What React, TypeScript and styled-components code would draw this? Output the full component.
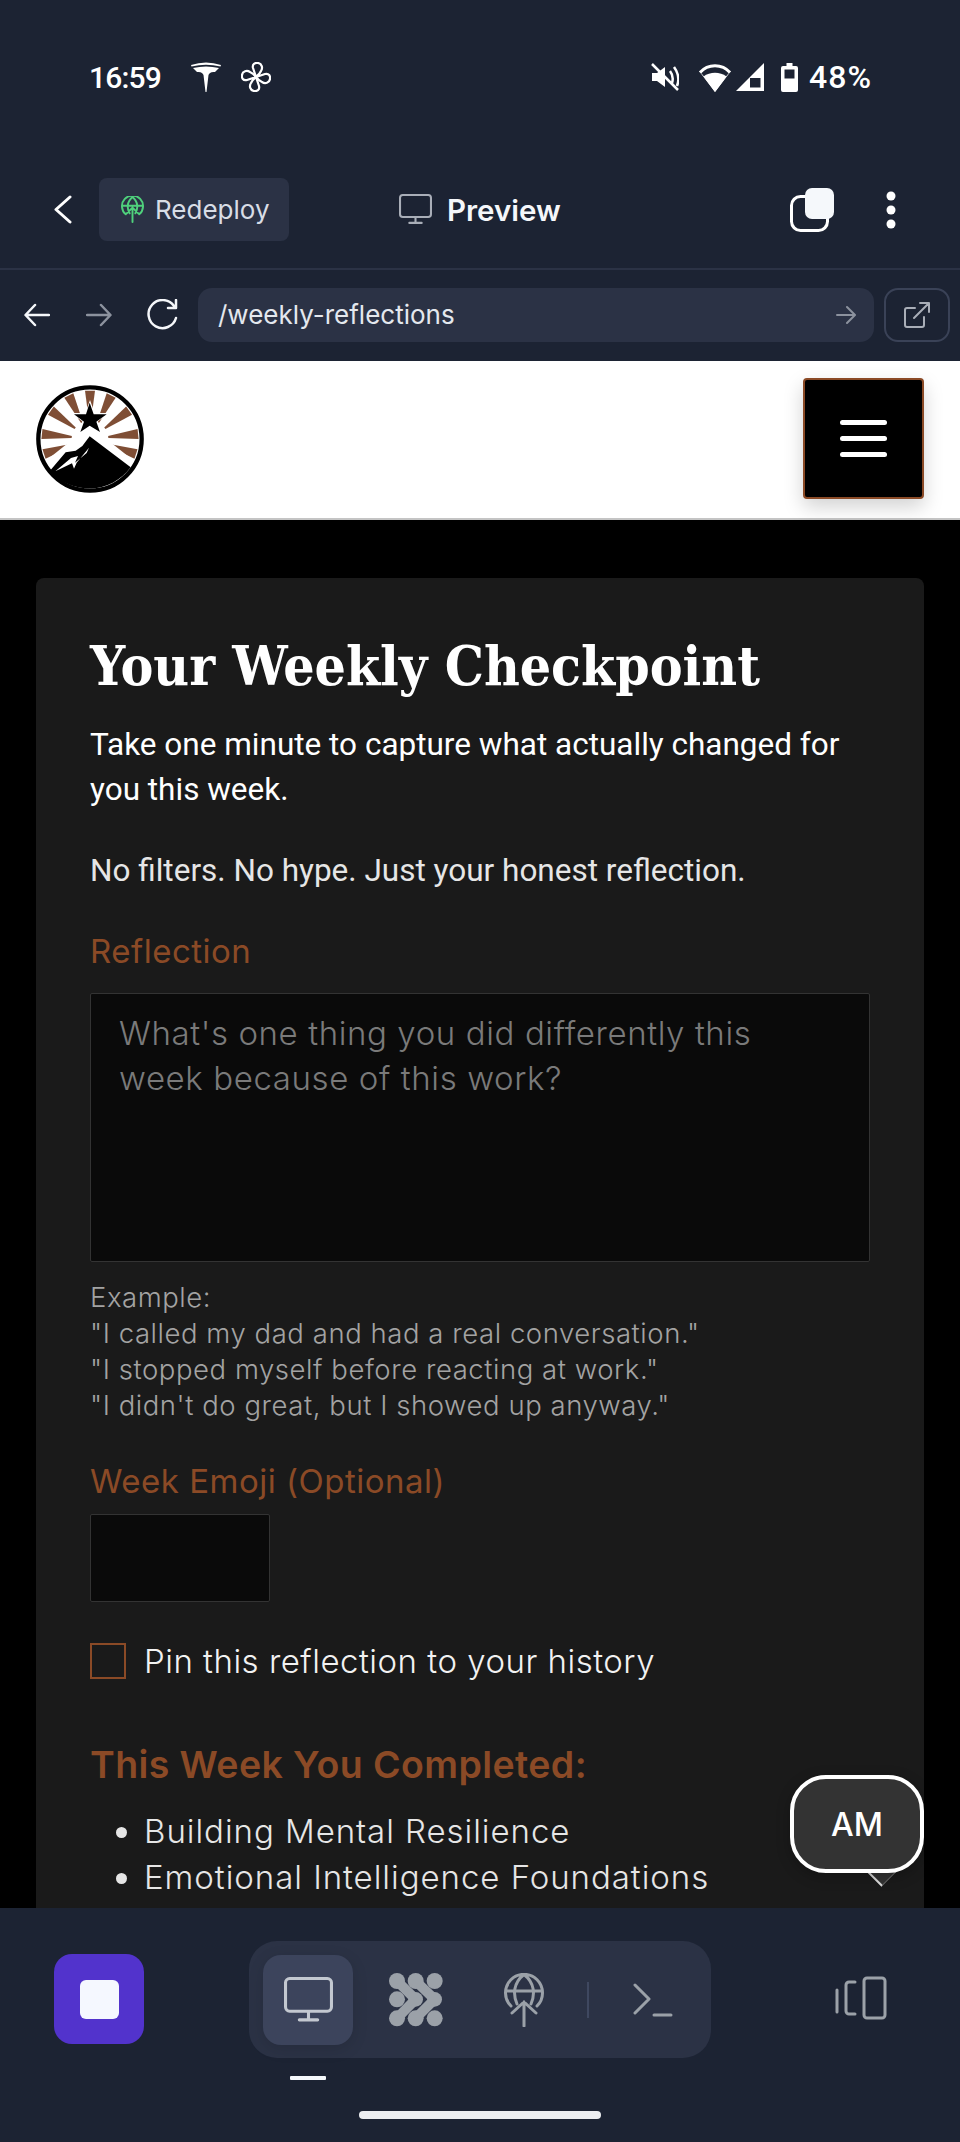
import React from 'react';
import styled, { createGlobalStyle } from 'styled-components';

const GlobalStyle = createGlobalStyle`
  html, body {
    margin: 0;
    padding: 0;
    background: #1c2333;
  }
  * {
    box-sizing: border-box;
  }
`;

const Phone = styled.div`
  width: 960px;
  height: 2142px;
  display: flex;
  flex-direction: column;
  overflow: hidden;
  background: #1c2333;
  font-family: 'Inter', sans-serif;
  color: #f5f7fa;
`;

const StatusBar = styled.div`
  height: 170px;
  flex: none;
  padding: 58px 88px 0 89px;
  display: flex;
  align-items: flex-start;
  justify-content: space-between;
`;

const StatusGroup = styled.div`
  display: flex;
  align-items: center;
  height: 38px;
`;

const Clock = styled.span`
  font-family: 'Roboto', sans-serif;
  font-size: 30px;
  font-weight: 500;
  letter-spacing: -0.8px;
  color: #fff;
`;

const BatteryText = styled.span`
  margin-left: 11px;
  font-family: 'Roboto', sans-serif;
  font-size: 32px;
  font-weight: 500;
  letter-spacing: 1px;
  color: #fff;
`;

const ToolBar = styled.div`
  height: 100px;
  flex: none;
  display: flex;
  align-items: center;
  padding: 0 0 19px 54px;
  border-bottom: 2px solid #2b3245;
`;

const RedeployButton = styled.div`
  width: 190px;
  height: 63px;
  margin-left: 27px;
  border-radius: 8px;
  background: #2b3245;
  display: flex;
  align-items: center;
  padding-left: 22px;
  gap: 11px;
  font-size: 26px;
  color: #d8dde6;
`;

const PreviewTitle = styled.div`
  display: flex;
  align-items: center;
  gap: 15px;
  margin-left: 110px;
  font-size: 29.5px;
  font-weight: 600;
  color: #f5f7fa;
`;

const ToolActions = styled.div`
  margin-left: auto;
  display: flex;
  align-items: center;
  gap: 52px;
  padding-right: 64px;
`;

const BrowserBar = styled.div`
  height: 91px;
  flex: none;
  display: flex;
  align-items: center;
  padding: 0 0 2px 24px;
`;

const UrlField = styled.div`
  width: 676px;
  height: 54px;
  margin-left: 19px;
  border-radius: 14px;
  background: #2b3245;
  display: flex;
  align-items: center;
  justify-content: space-between;
  padding: 0 18px 0 20px;
  font-size: 26px;
  color: #e4e8ee;
`;

const OpenButton = styled.div`
  width: 66px;
  height: 54px;
  margin-left: 10px;
  border: 2px solid #3a4257;
  border-radius: 14px;
  display: flex;
  align-items: center;
  justify-content: center;
`;

const WebView = styled.div`
  position: relative;
  flex: 1;
  min-height: 0;
  overflow: hidden;
  background: #000;
`;

const SiteHeader = styled.div`
  height: 159px;
  background: #fff;
  border-bottom: 2px solid #c4c4c4;
  display: flex;
  align-items: center;
  justify-content: space-between;
  padding: 0 36px 2px 36px;
`;

const MenuButton = styled.div`
  width: 121px;
  height: 121px;
  background: #000;
  border: 2px solid #8b4a26;
  border-radius: 4px;
  box-shadow: 0 8px 20px rgba(0, 0, 0, 0.18);
  display: flex;
  flex-direction: column;
  align-items: center;
  justify-content: center;
  gap: 11px;
`;

const MenuLine = styled.span`
  width: 47px;
  height: 5px;
  border-radius: 3px;
  background: #fff;
`;

const Card = styled.div`
  margin: 58px 36px 0 36px;
  padding: 57px 54px 120px;
  background: #1a1a1a;
  border-radius: 8px;
`;

const Heading = styled.h1`
  margin: 0;
  font-family: 'DejaVu Serif Condensed', 'DejaVu Serif', serif;
  font-size: 54.8px;
  line-height: 62px;
  font-weight: 700;
  white-space: nowrap;
  color: #fff;
`;

const Lead = styled.p`
  margin: 25px 0 0;
  font-family: 'Roboto', sans-serif;
  font-size: 31.5px;
  line-height: 45px;
  color: #fff;
`;

const Tagline = styled(Lead)`
  margin-top: 36px;
  color: #e6e6e6;
`;

const FieldLabel = styled.div`
  margin-top: 38px;
  font-size: 33px;
  font-weight: 400;
  letter-spacing: 0.5px;
  line-height: 40px;
  color: #8b4a26;
`;

const TextArea = styled.div`
  height: 269px;
  margin-top: 22px;
  padding: 17px 40px 22px 28px;
  background: #0a0a0a;
  border: 1px solid #333;
  border-radius: 2px;
  font-size: 33px;
  font-weight: 300;
  letter-spacing: 0.6px;
  line-height: 45px;
  color: #7a7a7a;
`;

const Hint = styled.div`
  margin-top: 17px;
  font-size: 27.5px;
  font-weight: 300;
  letter-spacing: 0.55px;
  line-height: 36px;
  color: #a3a3a3;
`;

const EmojiBox = styled.div`
  width: 180px;
  height: 88px;
  margin-top: 13px;
  background: #0a0a0a;
  border: 1px solid #333;
  border-radius: 2px;
`;

const PinRow = styled.div`
  display: flex;
  align-items: center;
  gap: 18px;
  margin-top: 39px;
  font-size: 33px;
  font-weight: 300;
  letter-spacing: 0.5px;
  color: #f2f2f2;
`;

const CheckBox = styled.span`
  width: 36px;
  height: 36px;
  border: 2px solid #8b4a26;
`;

const SubHeading = styled.h2`
  margin: 61px 0 0;
  font-size: 37.5px;
  line-height: 46px;
  font-weight: 600;
  letter-spacing: 0.4px;
  color: #8b4a26;
`;

const Modules = styled.ul`
  margin: 20px 0 0;
  padding-left: 54px;
  font-size: 33px;
  font-weight: 300;
  letter-spacing: 0.95px;
  line-height: 46px;
  color: #e6e6e6;
`;

const Bubble = styled.div`
  position: absolute;
  top: 1414px;
  right: 36px;
  width: 134px;
  height: 98px;
  border: 4px solid #fff;
  border-radius: 36px;
  background: #333;
  box-shadow: 0 4px 14px rgba(0, 0, 0, 0.25);
  display: flex;
  align-items: center;
  justify-content: center;
  font-size: 32px;
  font-weight: 500;
  color: #fff;
`;

const BubbleTail = styled.span`
  position: absolute;
  top: 1498px;
  left: 870px;
  width: 23px;
  height: 23px;
  background: #333;
  border-right: 1px solid #666;
  border-bottom: 2px solid #ddd;
  transform: rotate(45deg);
`;

const BottomNav = styled.div`
  position: relative;
  height: 234px;
  flex: none;
  background: #1c2333;
  display: flex;
  align-items: flex-start;
  padding: 33px 0 0 54px;
`;

const StopButton = styled.div`
  width: 90px;
  height: 90px;
  margin-top: 13px;
  border-radius: 18px;
  background: #5233cc;
  display: flex;
  align-items: center;
  justify-content: center;
`;

const StopSquare = styled.span`
  width: 39px;
  height: 39px;
  border-radius: 6px;
  background: #f5f8ff;
`;

const TabPill = styled.div`
  width: 462px;
  height: 117px;
  margin-left: 105px;
  border-radius: 28px;
  background: #2b3245;
  display: flex;
  align-items: center;
  padding-left: 14px;
`;

const Tab = styled.div<{ $active?: boolean }>`
  width: 90px;
  height: 90px;
  border-radius: 18px;
  margin-right: 18px;
  display: flex;
  align-items: center;
  justify-content: center;
  background: ${(p) => (p.$active ? '#3c445c' : 'transparent')};
  box-shadow: ${(p) => (p.$active ? '0 4px 16px rgba(0, 0, 0, 0.12)' : 'none')};
`;

const TabDivider = styled.span`
  width: 2px;
  height: 36px;
  background: #3f4860;
`;

const TerminalIcon = styled.svg`
  margin-left: 44px;
`;

const TabIndicator = styled.span`
  position: absolute;
  left: 290px;
  top: 168px;
  width: 36px;
  height: 4px;
  background: #f5f9fc;
  border-radius: 1px;
`;

const HomeBar = styled.span`
  position: absolute;
  left: 359px;
  top: 203px;
  width: 242px;
  height: 8px;
  border-radius: 4px;
  background: #eceef1;
`;

const PanesIcon = styled.div`
  margin: 35px 0 0 124px;
`;

const IconGap = styled.span<{ $w: number }>`
  display: inline-block;
  flex: none;
  width: ${(p) => p.$w}px;
`;

const Monitor = ({ width, color }: { width: number; color: string }) => (
  <svg width={width} height={(width * 44) / 48} viewBox="0 0 48 44" fill="none" stroke={color} strokeWidth="3" strokeLinecap="round" strokeLinejoin="round">
    <rect x="1.5" y="1.5" width="45" height="32" rx="4" />
    <path d="M24 34v8M15 42h18" />
  </svg>
);

const RAYS = [-108, -84, -54, -26, 0, 26, 54, 84, 108];

// drawn in the coordinates of a 3x crop of the logo
const Logo = () => (
  <svg width="108" height="108" viewBox="46 43 324 324">
    <circle cx="208" cy="205" r="155" fill="#fff" />
    {RAYS.map((a) => (
      <path key={a} d="M193 60H223L211 150H205Z" fill="#7f4e35" transform={`rotate(${a} 208 205)`} />
    ))}
    <path d="M207 165 345 275 208 350 70 275Z" fill="#fff" />
    <path d="M208 88 222 127 266 127 232 152 246 194 208 170 172 194 185 152 150 127 194 127Z" fill="#fff" />
    <path d="M207 96 219 131 258 131 227 153 238 184 207 165 179 184 190 153 160 131 196 131Z" fill="#000" />
    <path d="M207 197 330 290A155 155 0 0 1 88 300L135 245 165 240 185 226Z" fill="#000" />
    <path d="M104 302 151 262 172 256 163 276 198 247 205 231 168 276 160 294 154 278Z" fill="#fff" />
    <circle cx="208" cy="205" r="155" fill="none" stroke="#000" strokeWidth="13" />
  </svg>
);

export default function App() {
  return (
    <Phone>
      <GlobalStyle />
      <StatusBar>
        <StatusGroup>
          <Clock>16:59</Clock>
          <IconGap $w={30} />
          <svg width="30" height="30" viewBox="0 0 30 30" fill="#fff">
            <path d="M0 3Q15-2 30 3L29.500 4.500Q15 1 .5 4.500Z" />
            <path d="M2 6Q15 3 28 6L24 10C20 9.500 18 11 17.500 13L15.500 30H14.500L12.500 13C12 11 10 9.500 6 10Z" />
          </svg>
          <IconGap $w={20} />
          <svg width="30" height="30" viewBox="0 0 30 30" fill="none" stroke="#fff" strokeWidth="2.200" strokeLinejoin="round">
            {[0, 90, 180, 270].map((a) => (
              <path key={a} d="M15 15 12 6C11 2 14 .5 17 1 21 1.500 22 6 20 9 19 11.500 17 13.500 15 15Z" transform={`rotate(${a} 15 15)`} />
            ))}
          </svg>
        </StatusGroup>
        <StatusGroup>
          <svg width="28" height="28" viewBox="0 0 28 28" fill="none" stroke="#fff" strokeWidth="2.500">
            <path d="M1 1 27 27" />
            <path d="M1 10h5l8-6v20l-8-6H1Z" fill="#fff" stroke="none" />
            <path d="M19 8c3 4 3 9 2 12M23 4c5 7 5 14 3 19" />
          </svg>
          <IconGap $w={19} />
          <svg width="34" height="29" viewBox="0 0 34 29" fill="none">
            <path d="M17 29 5.500 13.500C12 8.500 22 8.500 28.500 13.500Z" fill="#fff" />
            <path d="M2 9.500C10 .5 24 .5 32 9.500" stroke="#fff" strokeWidth="3" />
            <path d="M17 29 1 8 4 11 17 27 30 11 33 8Z" fill="#fff" />
          </svg>
          <IconGap $w={4} />
          <svg width="28" height="28" viewBox="0 0 28 28" fill="#fff" fillRule="evenodd">
            <path d="M28 0V28H0ZM24.500 15H14V24.500H24.500Z" />
          </svg>
          <IconGap $w={17} />
          <svg width="17" height="29" viewBox="0 0 17 29" fill="#fff" fillRule="evenodd">
            <path d="M5.500 0h6v3H15a2 2 0 0 1 2 2v22a2 2 0 0 1-2 2H2a2 2 0 0 1-2-2V5a2 2 0 0 1 2-2h3.500ZM3.500 6.500v9h10v-9Z" />
          </svg>
          <BatteryText>48%</BatteryText>
        </StatusGroup>
      </StatusBar>

      <ToolBar>
        <svg width="18" height="29" viewBox="0 0 18 29" fill="none" stroke="#fff" strokeWidth="3" strokeLinecap="round" strokeLinejoin="round">
          <path d="M16 2 2 14.500 16 27" />
        </svg>
        <RedeployButton>
          <svg width="23" height="27" viewBox="0 0 24 28" fill="none" stroke="#4fd17c" strokeWidth="2" strokeLinecap="round">
            <path d="M5 19A11 11 0 1 1 19 19M1 10h22M12 1c-6 5-6 12-3 17M12 1c6 5 6 12 3 17M12 27V12M6 18l6-6 6 6" />
          </svg>
          Redeploy
        </RedeployButton>
        <PreviewTitle>
          <Monitor width={33} color="#a9aeb8" />
          Preview
        </PreviewTitle>
        <ToolActions>
          <svg width="44" height="44" viewBox="0 0 44 44" fill="none">
            <rect x="1.500" y="8.500" width="36" height="34" rx="9" stroke="#fff" strokeWidth="3" />
            <rect x="15" y="0" width="29" height="31" rx="7" fill="#f5f8fb" />
          </svg>
          <svg width="10" height="38" viewBox="0 0 10 38" fill="#fff">
            <circle cx="5" cy="5" r="4.500" />
            <circle cx="5" cy="19" r="4.500" />
            <circle cx="5" cy="33" r="4.500" />
          </svg>
        </ToolActions>
      </ToolBar>

      <BrowserBar>
        <svg width="26" height="24" viewBox="0 0 26 24" fill="none" stroke="#f5f7fa" strokeWidth="2.500" strokeLinecap="round" strokeLinejoin="round">
          <path d="M25 12H2M11 2 1.500 12 11 22" />
        </svg>
        <IconGap $w={36} />
        <svg width="26" height="24" viewBox="0 0 26 24" fill="none" stroke="#8c929e" strokeWidth="2.500" strokeLinecap="round" strokeLinejoin="round">
          <path d="M1 12h23M15 2l9.500 10L15 22" />
        </svg>
        <IconGap $w={33} />
        <svg width="34" height="32" viewBox="0 0 34 32" fill="none" stroke="#f5f7fa" strokeWidth="2.500" strokeLinecap="round" strokeLinejoin="round">
          <path d="M29 7A14 14 0 1 0 31 19M31 1v8h-8" />
        </svg>
        <UrlField>
          /weekly-reflections
          <svg width="20" height="20" viewBox="0 0 20 20" fill="none" stroke="#8c929e" strokeWidth="2" strokeLinecap="round" strokeLinejoin="round">
            <path d="M1 10h17M11 2l8 8-8 8" />
          </svg>
        </UrlField>
        <OpenButton>
          <svg width="26" height="26" viewBox="0 0 26 26" fill="none" stroke="#a9aeb8" strokeWidth="2" strokeLinecap="round" strokeLinejoin="round">
            <path d="M20 15v8a2 2 0 0 1-2 2H3a2 2 0 0 1-2-2V8a2 2 0 0 1 2-2h8M10 16 24 2M16 1h9v9" />
          </svg>
        </OpenButton>
      </BrowserBar>

      <WebView>
        <SiteHeader>
          <Logo />
          <MenuButton>
            <MenuLine />
            <MenuLine />
            <MenuLine />
          </MenuButton>
        </SiteHeader>
        <Card>
          <Heading>Your Weekly Checkpoint</Heading>
          <Lead>Take one minute to capture what actually changed for you this week.</Lead>
          <Tagline>No filters. No hype. Just your honest reflection.</Tagline>
          <FieldLabel>Reflection</FieldLabel>
          <TextArea>What's one thing you did differently this week because of this work?</TextArea>
          <Hint>
            Example:
            <br />
            "I called my dad and had a real conversation."
            <br />
            "I stopped myself before reacting at work."
            <br />
            "I didn't do great, but I showed up anyway."
          </Hint>
          <FieldLabel>Week Emoji (Optional)</FieldLabel>
          <EmojiBox />
          <PinRow>
            <CheckBox />
            Pin this reflection to your history
          </PinRow>
          <SubHeading>This Week You Completed:</SubHeading>
          <Modules>
            <li>Building Mental Resilience</li>
            <li>Emotional Intelligence Foundations</li>
          </Modules>
        </Card>
        <BubbleTail />
        <Bubble>AM</Bubble>
      </WebView>

      <BottomNav>
        <StopButton>
          <StopSquare />
        </StopButton>
        <TabPill>
          <Tab $active>
            <Monitor width={49} color="#c3c8d0" />
          </Tab>
          <Tab>
            <svg width="54" height="54" viewBox="448 126 162 162" fill="#9ba1a8">
              <circle cx="472" cy="150" r="24" />
              <circle cx="528" cy="150" r="24" />
              <circle cx="585" cy="150" r="24" />
              <circle cx="472" cy="205" r="24" />
              <circle cx="528" cy="205" r="22" />
              <circle cx="585" cy="205" r="22" />
              <circle cx="472" cy="262" r="24" />
              <circle cx="528" cy="262" r="24" />
              <circle cx="585" cy="262" r="24" />
              <path d="M472 150 528 205 472 262M528 150 585 205 528 262" fill="none" stroke="#9ba1a8" strokeWidth="30" strokeLinejoin="round" />
            </svg>
          </Tab>
          <Tab>
            <svg width="40" height="54" viewBox="0 0 40 54" fill="none" stroke="#9ba1a8" strokeWidth="3" strokeLinecap="round">
              <path d="M7 33A18.500 18.500 0 1 1 33 33M1.500 18H38.500M20 1.500C9 10 9 22 13 31M20 1.500C31 10 31 22 27 31M20 53V29M8 40 20 29 32 40" />
            </svg>
          </Tab>
          <TabDivider />
          <TerminalIcon width="40" height="34" viewBox="0 0 40 34" fill="none" stroke="#9ba1a8" strokeWidth="3" strokeLinecap="round" strokeLinejoin="round">
            <path d="M2 2 16 16 2 30M21 32H38" />
          </TerminalIcon>
        </TabPill>
        <PanesIcon>
          <svg width="52" height="44" viewBox="0 0 52 44" fill="none" stroke="#9ba1a8" strokeWidth="3" strokeLinecap="round" strokeLinejoin="round">
            <path d="M2 14v22M20 6h-6a3 3 0 0 0-3 3v26a3 3 0 0 0 3 3h6" />
            <rect x="29" y="2" width="21" height="40" rx="3" />
          </svg>
        </PanesIcon>
        <TabIndicator />
        <HomeBar />
      </BottomNav>
    </Phone>
  );
}
